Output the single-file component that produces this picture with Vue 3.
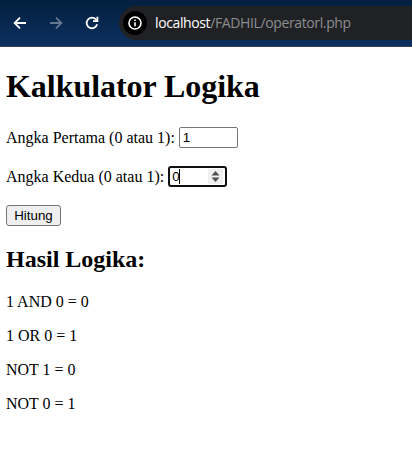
<script setup>
import { ref } from 'vue'

const first = ref('1')
const second = ref('0')
const results = ['1 AND 0 = 0', '1 OR 0 = 1', 'NOT 1 = 0', 'NOT 0 = 1']
</script>

<template>
  <div class="window">
    <header class="toolbar">
      <nav class="nav">
        <svg class="icon" viewBox="0 0 14 14"><path d="M13 7H2M7 1.6L1.6 7L7 12.4" /></svg>
        <svg class="icon dim" viewBox="0 0 14 14"><path d="M1 7h11M7 1.6L12.4 7L7 12.4" /></svg>
        <svg class="icon" viewBox="0 0 14 14"><path d="M12.1 8.2A5.3 5.3 0 1 1 11 3.5L12 4.6" /><path d="M12.4 .8V5.2H8" /></svg>
      </nav>
      <div class="address">
        <span class="info">
          <svg viewBox="0 0 14 14"><circle cx="7" cy="7" r="6" /><path d="M7 6.2V10.2M7 3.6V5" /></svg>
        </span>
        <span class="url"><span class="host">localhost</span>/FADHIL/operatorl.php</span>
      </div>
    </header>
    <main class="page">
      <h1>Kalkulator Logika</h1>
      <form @submit.prevent>
        <div class="row">
          <label for="first">Angka Pertama (0 atau 1):</label>
          <span class="field"><input id="first" v-model="first" /></span>
        </div>
        <div class="row">
          <label for="second">Angka Kedua (0 atau 1):</label>
          <span class="field focused">
            <input id="second" v-model="second" />
            <i class="caret"></i>
            <span class="spinner">
              <svg viewBox="0 0 15 15"><path d="M3.5 6.5L7.5 2L11.5 6.5ZM3.5 8.5H11.5L7.5 13Z" /></svg>
            </span>
          </span>
        </div>
        <button type="submit">Hitung</button>
      </form>
      <h2>Hasil Logika:</h2>
      <p v-for="line in results" :key="line">{{ line }}</p>
    </main>
  </div>
</template>

<style>
body { margin: 0; background: #fff; }
</style>

<style scoped>
.window { height: 452px; overflow: hidden; background: #fff; color: #000; }
.toolbar {
  box-sizing: border-box;
  height: 47px;
  display: flex;
  padding: 6px 0 0 13px;
  background: linear-gradient(#02203f 0 3px, #06244a 15px, #0c305f 45px);
  border-bottom: 1px solid #3c4148;
}
.nav { display: flex; align-items: center; gap: 22px; height: 34px; width: 106px; flex: none; }
.icon { width: 14px; height: 14px; fill: none; stroke: #fff; stroke-width: 1.8; }
.dim { stroke: #66788f; }
.address {
  flex: 1;
  height: 34px;
  display: flex;
  align-items: center;
  background: #202124;
  border-radius: 17px 0 0 17px;
  padding-left: 4px;
}
.info {
  width: 24px;
  height: 24px;
  border-radius: 50%;
  background: #000;
  display: flex;
  align-items: center;
  justify-content: center;
}
.info svg { width: 14px; height: 14px; fill: none; stroke: #fff; stroke-width: 1.6; }
.url {
  margin-left: 8px;
  font: 14px/20px "Open Sans", "Noto Sans", sans-serif;
  letter-spacing: -0.38px;
  color: #8b8d90;
  white-space: nowrap;
}
.host { color: #fff; }
.page { padding: 21px 6px 0; font: 16px/18px "Liberation Serif", serif; }
h1 { margin: 0 0 22px; font-size: 32px; line-height: 37px; letter-spacing: -0.05px; }
.row { display: flex; align-items: center; gap: 4px; height: 21px; margin-bottom: 18px; white-space: nowrap; }
.field {
  box-sizing: border-box;
  position: relative;
  width: 59px;
  height: 21px;
  display: flex;
  align-items: center;
  border: 1px solid #767676;
  border-radius: 2px;
  background: #fff;
  padding-left: 3px;
}
.field input {
  flex: 1;
  min-width: 0;
  border: 0;
  padding: 0;
  outline: 0;
  background: transparent;
  color: #000;
  font: 13.333px/15px "Liberation Sans", sans-serif;
}
.focused { border: 2px solid #101010; border-radius: 3px; padding-left: 2px; }
.caret { position: absolute; left: 9px; top: 1px; width: 1px; height: 15px; background: #000; }
.spinner { width: 15px; height: 15px; margin-right: 2px; background: #f0f0f0; display: flex; }
.spinner svg { width: 15px; height: 15px; fill: #505050; }
button {
  display: block;
  box-sizing: border-box;
  width: 55px;
  height: 21px;
  padding: 0;
  border: 1px solid #767676;
  border-radius: 3px;
  background: #efefef;
  color: #000;
  font: 13.333px/15px "Liberation Sans", sans-serif;
}
h2 { margin: 20px 0; font-size: 24px; line-height: 27px; }
p { margin: 0 0 16px; }
</style>
